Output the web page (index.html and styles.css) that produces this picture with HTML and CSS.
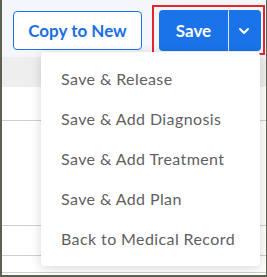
FILE: index.html
```html
<!DOCTYPE html>
<html>
<head>
    <title>Save menu</title>
    <link rel="stylesheet" href="styles.css">
</head>
<body>
<div class="screen">
    <div class="toolbar">
        <button class="btn-outline">Copy to New</button>
        <div class="split">
            <button class="btn-save">Save</button>
            <button class="btn-caret">
                <svg width="12" height="8" viewBox="0 0 12 8"><path d="M2 2l4 4 4-4" fill="none" stroke="#fff" stroke-width="2" stroke-linecap="round" stroke-linejoin="round"/></svg>
            </button>
        </div>
    </div>
    <div class="table">
        <div class="thead"></div>
        <div class="row r1"></div>
        <div class="row r2"></div>
        <div class="row r3"></div>
        <div class="row r4"></div>
    </div>

    <div class="menu">
        <div class="menu-item">Save &amp; Release</div>
        <div class="menu-item">Save &amp; Add Diagnosis</div>
        <div class="menu-item">Save &amp; Add Treatment</div>
        <div class="menu-item">Save &amp; Add Plan</div>
        <div class="menu-item">Back to Medical Record</div>
    </div>
</div>
</body>
</html>
```

FILE: styles.css
```css
body {
    margin: 0;
    background-color: #5c604e;
    font-family: Lato, "Open Sans", sans-serif;
}

.screen {
    position: relative;
    width: 264px;
    height: 275px;
    margin-left: 2px;
    background-color: #fff;
    overflow: hidden;
}

.toolbar {
    height: 57px;
    box-sizing: border-box;
    padding: 10px 0 0 11px;
    display: flex;
    align-items: flex-start;
    gap: 17px;
    background-color: #f4f6f9;
}

.btn-outline {
    margin-top: 1px;
    width: 129px;
    height: 39px;
    border: 1px solid #1a73e8;
    border-radius: 4px;
    background-color: #fff;
    color: #1a6fe3;
    font-family: inherit;
    font-size: 17px;
    font-weight: 700;
    padding: 0;
}

.split {
    position: relative;
    display: flex;
    height: 41px;
    border-radius: 4px;
    background-color: #1a73e8;
}

.split::after {
    content: "";
    position: absolute;
    top: -5px;
    bottom: -4px;
    left: -7px;
    right: -4px;
    border: 2px solid #e3262b;
}

.btn-save {
    width: 70px;
    border: none;
    border-right: 1px solid #dbe6fb;
    background: none;
    color: #fff;
    font-family: inherit;
    font-size: 17px;
    font-weight: 700;
    padding: 0;
}

.btn-caret {
    width: 32px;
    border: none;
    background: none;
    padding: 0 3px 0 0;
    display: flex;
    align-items: center;
    justify-content: center;
}

.table .thead {
    height: 30px;
    background-color: #eeeeee;
}

.table .row {
    border-bottom: 1px solid #cfcfcf;
}

.row.r1 { height: 33px; }
.row.r2 { height: 104px; }
.row.r3 { height: 29px; }
.row.r4 { height: 16px; }

.menu {
    position: absolute;
    left: 39px;
    top: 52px;
    width: 219px;
    padding: 7px 0;
    background-color: #fff;
    border-radius: 4px;
    box-shadow: 0 2px 12px rgba(0, 0, 0, 0.16);
}

.menu-item {
    height: 40px;
    line-height: 40px;
    padding-left: 20px;
    color: #5f5f5f;
    font-size: 16px;
    letter-spacing: 0.4px;
}
```
